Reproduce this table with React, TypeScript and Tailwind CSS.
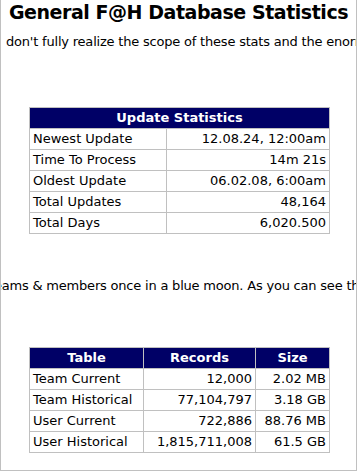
import React from 'react';

const font = { fontFamily: 'Verdana, "DejaVu Sans", sans-serif' };

const updateRows = [
  ['Newest Update', '12.08.24, 12:00am'],
  ['Time To Process', '14m 21s'],
  ['Oldest Update', '06.02.08, 6:00am'],
  ['Total Updates', '48,164'],
  ['Total Days', '6,020.500'],
];

const tableRows = [
  ['Team Current', '12,000', '2.02 MB'],
  ['Team Historical', '77,104,797', '3.18 GB'],
  ['User Current', '722,886', '88.76 MB'],
  ['User Historical', '1,815,711,008', '61.5 GB'],
];

export default function App() {
  return (
    <div
      className="w-[357px] h-[471px] border-l border-r border-b border-[#c0c0c0] overflow-hidden bg-white text-black"
      style={font}
    >
      {/* Heading */}
      <h1 className="text-[19px] font-bold leading-[24px] tracking-[-0.45px] text-center whitespace-nowrap">
        General F@H Database Statistics
      </h1>

      <p className="mt-[9px] pl-[5px] text-[13px] leading-[18px] tracking-[-0.2px] whitespace-nowrap">
        don't fully realize the scope of these stats and the enormous amount of data
      </p>

      {/* Update stats */}
      <table className="mt-[56px] ml-[28px] w-[300px] border-collapse text-[13px] table-fixed">
        <colgroup>
          <col className="w-[137px]" />
          <col className="w-[163px]" />
        </colgroup>
        <thead>
          <tr className="h-[21px] bg-[#000066] text-white">
            <th colSpan={2} className="border border-[#c0c0c0] font-bold text-center p-0">
              Update Statistics
            </th>
          </tr>
        </thead>
        <tbody>
          {updateRows.map(([k, v]) => (
            <tr key={k} className="h-[21px]">
              <td className="border border-[#c0c0c0] px-[3px] py-0 text-left">{k}</td>
              <td className="border border-[#c0c0c0] px-[3px] py-0 text-right">{v}</td>
            </tr>
          ))}
        </tbody>
      </table>

      <p className="mt-[43px] ml-[-12px] text-[13px] leading-[18px] tracking-[-0.2px] whitespace-nowrap">
        teams &amp; members once in a blue moon. As you can see they are quite large
      </p>

      {/* Table sizes */}
      <table className="mt-[52px] ml-[28px] w-[300px] border-collapse text-[13px] table-fixed">
        <colgroup>
          <col className="w-[114px]" />
          <col className="w-[112px]" />
          <col className="w-[74px]" />
        </colgroup>
        <thead>
          <tr className="h-[21px] bg-[#000066] text-white">
            <th className="border border-[#c0c0c0] font-bold text-center p-0">Table</th>
            <th className="border border-[#c0c0c0] font-bold text-center p-0">Records</th>
            <th className="border border-[#c0c0c0] font-bold text-center p-0">Size</th>
          </tr>
        </thead>
        <tbody>
          {tableRows.map(([a, b, c]) => (
            <tr key={a} className="h-[21px]">
              <td className="border border-[#c0c0c0] px-[3px] py-0 text-left">{a}</td>
              <td className="border border-[#c0c0c0] px-[3px] py-0 text-right">{b}</td>
              <td className="border border-[#c0c0c0] px-[3px] py-0 text-right">{c}</td>
            </tr>
          ))}
        </tbody>
      </table>
    </div>
  );
}
